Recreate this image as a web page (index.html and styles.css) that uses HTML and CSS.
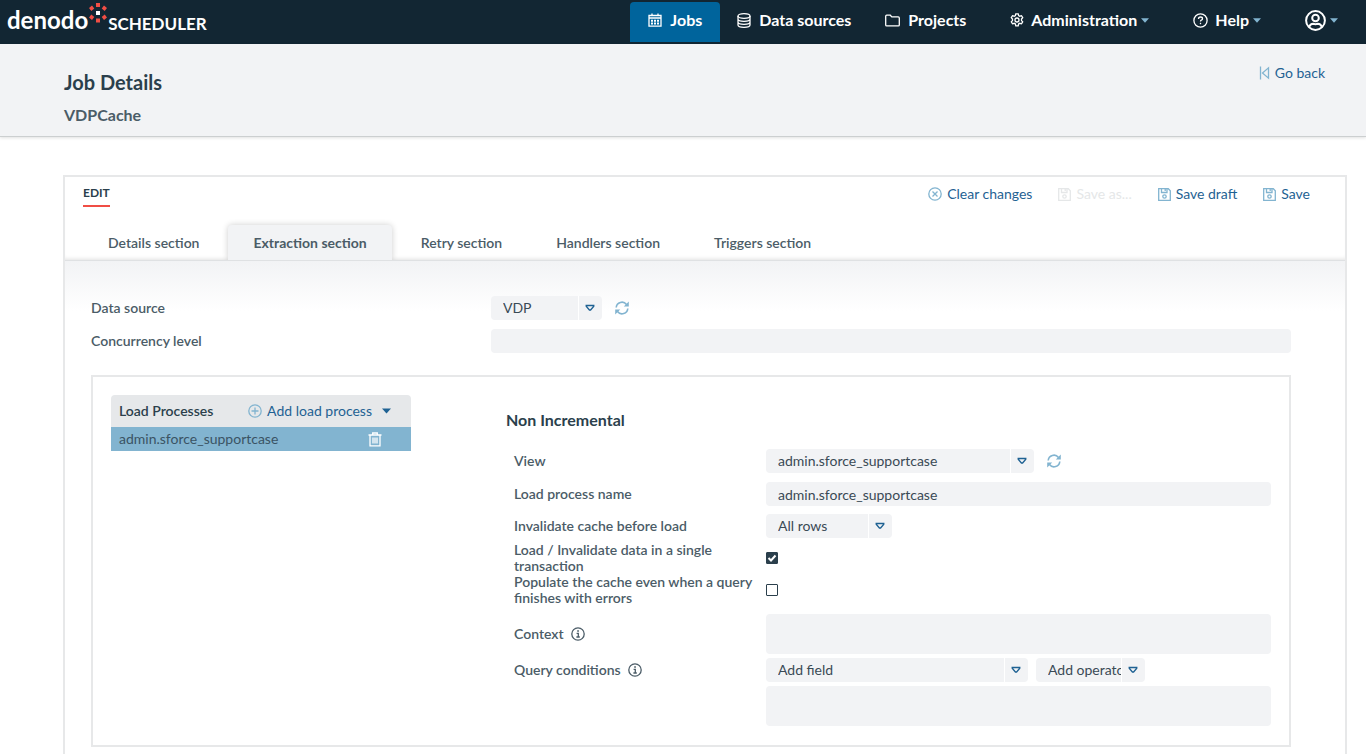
FILE: index.html
```html
<!DOCTYPE html>
<html lang="en">
<head>
    <meta charset="UTF-8">
    <meta name="viewport" content="width=device-width, initial-scale=1.0">
    <title>Denodo Scheduler</title>
    <link rel="stylesheet" href="styles.css">
</head>
<body>
    <!-- shared icons -->
    <svg class="sprite" aria-hidden="true">
        <symbol id="i-save" viewBox="0 0 13 13">
            <path d="M.700.700h9.600l2 2v9.600H.700z M3.500.700v3.800h5.500V.700 M7.200 1v2"/>
            <circle cx="6.500" cy="8.500" r="1.700"/>
        </symbol>
        <symbol id="i-refresh" viewBox="0 0 14 14">
            <path d="M1.200 6.500A5.800 5.800 0 0 1 11.500 3.400 M12.800 7.500A5.800 5.800 0 0 1 2.500 10.600"/>
            <path class="solid" d="M13.800 .500v5H8.800z M.200 13.500V8.500h5z"/>
        </symbol>
        <symbol id="i-info" viewBox="0 0 14 14">
            <circle cx="7" cy="7" r="6.200"/>
            <path d="M5.600 6.300H7.300V10 M5.400 10h3.400"/>
            <path class="solid" d="M6.200 3.200h1.700v1.600H6.200z"/>
        </symbol>
        <symbol id="i-down" viewBox="0 0 10 8">
            <path d="M1.200 1.500h7.600v.8L5.600 6H4.400L1.200 2.300z"/>
        </symbol>
        <symbol id="i-caret" viewBox="0 0 8 5">
            <path class="solid" d="M0 .2h8L4 4.800z"/>
        </symbol>
    </svg>

    <header class="topbar">
        <a class="brand" href="#">
            <span class="brand-name">denodo</span>
            <svg class="brand-dots" width="20" height="20" viewBox="0 0 20 20">
                <g fill="#f04e45">
                    <path d="M8 0h4v4H8z M8 15.500h4v4H8z"/>
                    <path d="M1 5l3-2.500L6.300 5.500 3.300 8z M16 2.500L19 5 16.700 8l-3-2.500z M3.300 11.500l3 2.500L4 17l-3-2.500z M16.700 11.500L19 14.500 16 17l-2.300-3z"/>
                </g>
                <path fill="#fff" d="M8 8h4v4H8z"/>
            </svg>
            <span class="brand-product">SCHEDULER</span>
        </a>
        <nav class="menu">
            <a class="menu-item active" href="#">
                <svg class="icon" width="14" height="14" viewBox="0 0 14 14">
                    <path d="M1 2.500h12v10.700H1z M1 5h12 M4 .500V3 M10 .500V3"/>
                    <path stroke-dasharray="2 1" d="M3 7.800h8 M3 10.600h8" stroke-width="2"/>
                </svg>
                Jobs
            </a>
            <a class="menu-item" href="#">
                <svg class="icon" width="14" height="15" viewBox="0 0 14 15">
                    <ellipse cx="7" cy="3" rx="6" ry="2.300"/>
                    <path d="M1 3v9c0 1.300 2.700 2.300 6 2.300s6-1 6-2.300V3 M1 6c0 1.300 2.700 2.300 6 2.300S13 7.300 13 6 M1 9c0 1.300 2.700 2.300 6 2.300s6-1 6-2.300"/>
                </svg>
                Data sources
            </a>
            <a class="menu-item" href="#">
                <svg class="icon" width="15" height="13" viewBox="0 0 15 13">
                    <path d="M.700 2.200q0-1 1-1h3.600l1.500 1.700h6.500q1 0 1 1v7q0 1-1 1H1.700q-1 0-1-1z"/>
                </svg>
                Projects
            </a>
            <button class="menu-item drop" type="button">
                <svg class="icon" width="14" height="14" viewBox="0 0 14 14">
                    <path d="M5.800.8h2.400l.4 1.700 1.200.7 1.700-.5 1.200 2-1.200 1.300v1.600l1.200 1.200-1.200 2-1.700-.5-1.200.7-.4 1.900H5.800l-.4-1.900-1.200-.7-1.700.5-1.200-2 1.200-1.200V6L1.300 4.700l1.200-2 1.700.5 1.200-.7z"/>
                    <circle cx="7" cy="7" r="2"/>
                </svg>
                Administration
                <svg class="caret" width="8" height="5"><use href="#i-caret"/></svg>
            </button>
            <button class="menu-item drop" type="button">
                <svg class="icon" width="15" height="15" viewBox="0 0 15 15">
                    <circle cx="7.500" cy="7.500" r="6.600"/>
                    <path d="M5.500 6q0-2 2-2t2 1.700q0 1-1.200 1.500-.8.400-.8 1.400"/>
                    <path d="M7.500 9.800v1.400"/>
                </svg>
                Help
                <svg class="caret" width="8" height="5"><use href="#i-caret"/></svg>
            </button>
            <button class="menu-item drop user" type="button" aria-label="User">
                <svg class="icon" width="21" height="21" viewBox="0 0 21 21">
                    <circle cx="10.500" cy="10.500" r="9.400"/>
                    <circle cx="10.500" cy="8" r="3.300"/>
                    <path d="M4 17q1.300-3.200 4-3.200 2.500.8 5 0 2.700 0 4 3.200"/>
                </svg>
                <svg class="caret" width="8" height="5"><use href="#i-caret"/></svg>
            </button>
        </nav>
    </header>

    <div class="page-head">
        <div>
            <h1>Job Details</h1>
            <h2>VDPCache</h2>
        </div>
        <a class="action" href="#">
            <svg class="icon" width="11" height="14" viewBox="0 0 11 14">
                <path d="M1.500 .500v13 M9.500 1.800v10.400L3.500 7z"/>
            </svg>
            Go back
        </a>
    </div>

    <main class="panel">
        <div class="panel-top">
            <span class="mode">EDIT</span>
            <div class="actions">
                <button class="action" type="button">
                    <svg class="icon" width="14" height="14" viewBox="0 0 14 14"><circle cx="7" cy="7" r="6.200"/><path d="M4.500 4.500l5 5 M9.500 4.500l-5 5"/></svg>
                    Clear changes
                </button>
                <button class="action" type="button" disabled>
                    <svg class="icon" width="13" height="13"><use href="#i-save"/></svg>
                    Save as...
                </button>
                <button class="action" type="button">
                    <svg class="icon" width="13" height="13"><use href="#i-save"/></svg>
                    Save draft
                </button>
                <button class="action" type="button">
                    <svg class="icon" width="13" height="13"><use href="#i-save"/></svg>
                    Save
                </button>
            </div>
        </div>

        <nav class="tabs">
            <a class="tab" href="#">Details section</a>
            <a class="tab active" href="#">Extraction section</a>
            <a class="tab" href="#">Retry section</a>
            <a class="tab" href="#">Handlers section</a>
            <a class="tab" href="#">Triggers section</a>
        </nav>

        <form class="section">
            <div class="row">
                <label for="source">Data source</label>
                <div class="field">
                    <span class="select source">
                        <select id="source"><option>VDP</option></select>
                        <span class="arrow"><svg class="icon" width="10" height="8"><use href="#i-down"/></svg></span>
                    </span>
                    <button class="refresh" type="button" aria-label="Refresh"><svg class="icon" width="14" height="14"><use href="#i-refresh"/></svg></button>
                </div>
            </div>
            <div class="row">
                <label for="level">Concurrency level</label>
                <input class="text" type="text" id="level">
            </div>

            <div class="loads">
                <div class="processes">
                    <div class="processes-head">
                        <span>Load Processes</span>
                        <button class="action" type="button">
                            <svg class="icon" width="14" height="14" viewBox="0 0 14 14"><circle cx="7" cy="7" r="6.200"/><path d="M7 3.500v7 M3.500 7h7"/></svg>
                            Add load process
                            <svg class="caret" width="9" height="6"><use href="#i-caret"/></svg>
                        </button>
                    </div>
                    <div class="process">
                        <span>admin.sforce_supportcase</span>
                        <button class="remove" type="button" aria-label="Remove">
                            <svg class="icon" width="14" height="15" viewBox="0 0 14 15">
                                <path d="M.500 3h13 M4.700 3V1h4.600v2 M2 3v10.800h10V3 M5 5.500v6 M7 5.500v6 M9 5.500v6"/>
                            </svg>
                        </button>
                    </div>
                </div>

                <div class="details">
                    <h3>Non Incremental</h3>
                    <div class="row">
                        <label for="view">View</label>
                        <div class="field">
                            <span class="select view">
                                <select id="view"><option>admin.sforce_supportcase</option></select>
                                <span class="arrow"><svg class="icon" width="10" height="8"><use href="#i-down"/></svg></span>
                            </span>
                            <button class="refresh" type="button" aria-label="Refresh"><svg class="icon" width="14" height="14"><use href="#i-refresh"/></svg></button>
                        </div>
                    </div>
                    <div class="row">
                        <label for="name">Load process name</label>
                        <input class="text" type="text" id="name" value="admin.sforce_supportcase">
                    </div>
                    <div class="row">
                        <label for="invalidate">Invalidate cache before load</label>
                        <div class="field">
                            <span class="select rows">
                                <select id="invalidate"><option>All rows</option></select>
                                <span class="arrow"><svg class="icon" width="10" height="8"><use href="#i-down"/></svg></span>
                            </span>
                        </div>
                    </div>
                    <div class="row check">
                        <label for="single">Load / Invalidate data in a single transaction</label>
                        <input type="checkbox" id="single" checked>
                    </div>
                    <div class="row check">
                        <label for="populate">Populate the cache even when a query finishes with errors</label>
                        <input type="checkbox" id="populate">
                    </div>
                    <div class="row context">
                        <label for="context">Context <svg class="icon info" width="14" height="14"><use href="#i-info"/></svg></label>
                        <textarea class="text" id="context"></textarea>
                    </div>
                    <div class="row query">
                        <label for="query">Query conditions <svg class="icon info" width="14" height="14"><use href="#i-info"/></svg></label>
                        <div class="query-fields">
                            <div class="field">
                                <span class="select add-field">
                                    <select aria-label="Field"><option>Add field</option></select>
                                    <span class="arrow"><svg class="icon" width="10" height="8"><use href="#i-down"/></svg></span>
                                </span>
                                <span class="select add-operator">
                                    <select aria-label="Operator"><option>Add operator</option></select>
                                    <span class="arrow"><svg class="icon" width="10" height="8"><use href="#i-down"/></svg></span>
                                </span>
                            </div>
                            <textarea class="text" id="query"></textarea>
                        </div>
                    </div>
                </div>
            </div>
        </form>
    </main>
</body>
</html>
```
FILE: styles.css
```css
* {
    box-sizing: border-box;
}
body {
    display: flex;
    flex-direction: column;
    min-height: 100vh;
    margin: 0;
    background-color: #ffffff;
    color: #4b5c67;
    font-family: Lato, "Open Sans", sans-serif;
    font-size: 14px;
    line-height: 16px;
}
button, input, select, textarea {
    font: inherit;
    color: inherit;
}
button {
    padding: 0;
    border: none;
    background: none;
    cursor: pointer;
}
a {
    color: inherit;
    text-decoration: none;
}
h1, h2, h3 {
    margin: 0;
}
.sprite {
    display: none;
}
.icon {
    flex: none;
    fill: none;
    stroke: currentColor;
    stroke-width: 1.3;
}
.solid {
    fill: currentColor;
    stroke: none;
}

/* top bar */
.topbar {
    display: flex;
    justify-content: space-between;
    height: 44px;
    padding: 2px 28px 2px 7px;
    background-color: #122633;
    color: #ffffff;
}
.brand {
    display: flex;
    align-items: center;
    font-weight: bold;
}
.brand-name {
    padding-bottom: 4px;
    font-size: 24px;
    line-height: 36px;
}
.brand-dots {
    align-self: flex-start;
    margin-top: 1px;
}
.brand-product {
    font-size: 17px;
    padding-top: 4px;
}
.menu {
    display: flex;
}
.menu-item {
    display: flex;
    align-items: center;
    gap: 8px;
    padding: 0 17px 4px;
    font-size: 16px;
    font-weight: bold;
}
.menu-item.active {
    padding-left: 18px;
    padding-right: 18px;
    background-color: #00649c;
    border-radius: 4px 4px 0 0;
}
.menu-item .caret {
    color: #82b4d0;
}
.drop {
    gap: 4px;
    padding: 0 17px 4px 27px;
}
.drop .icon {
    margin-right: 3px;
}
.user {
    padding-right: 0;
}
.user .icon {
    margin-right: 0;
    stroke-width: 2;
}

/* page heading */
.page-head {
    display: flex;
    justify-content: space-between;
    align-items: flex-start;
    height: 93px;
    padding: 26px 41px 0 64px;
    background-color: #f2f3f5;
    border-bottom: 1px solid #cccfd0;
    box-shadow: 0 1px 3px rgba(0, 0, 0, 0.12);
}
h1 {
    font-size: 20px;
    line-height: 24px;
    color: #2b3f4c;
}
h2 {
    margin-top: 11px;
    font-size: 16px;
    line-height: 20px;
}
.action {
    display: flex;
    align-items: center;
    gap: 5px;
    color: #1f6293;
}
.action .icon {
    color: #82b4d0;
}
.page-head .action {
    margin-top: -5px;
}
.action:disabled, .action:disabled .icon {
    color: #e5e7e8;
}

/* edit panel */
.panel {
    flex: 1;
    display: flex;
    flex-direction: column;
    margin: 38px 19px 0 63px;
    border: 2px solid #e7e8e9;
    border-bottom: none;
}
.panel-top {
    display: flex;
    justify-content: space-between;
    align-items: flex-start;
    padding: 8px 35px 0 18px;
}
.mode {
    padding-bottom: 4px;
    border-bottom: 2px solid #f04e45;
    font-size: 12px;
    font-weight: bold;
    color: #2b3f4c;
}
.actions {
    display: flex;
    gap: 26px;
    padding-top: 1px;
}
.tabs {
    display: flex;
    margin-top: 12px;
    padding: 6px 0 0 18px;
    border-bottom: 1px solid #dfe1e3;
    box-shadow: inset 0 -4px 4px -3px rgba(0, 0, 0, 0.12);
    overflow: hidden;
}
.tab {
    padding: 10px 25px 9px;
    margin-right: 4px;
    font-weight: 600;
}
.tab.active {
    background-color: #f2f3f5;
    border-radius: 4px 4px 0 0;
    box-shadow: 0 0 6px rgba(0, 0, 0, 0.2);
    font-weight: bold;
}
.section {
    flex: 1;
    padding: 31px 54px 7px 26px;
    background: linear-gradient(#f2f3f5, #ffffff 50px);
}
.row {
    display: grid;
    grid-template-columns: 400px 1fr;
    align-items: center;
    padding: 4px 0 5px;
}
.row label {
    font-weight: 600;
}
.field {
    display: flex;
    align-items: center;
    gap: 13px;
}
.text {
    display: block;
    width: 100%;
    height: 24px;
    margin: 0;
    padding: 0 12px;
    border: none;
    border-radius: 4px;
    background-color: #f2f3f5;
    color: #3a4a55;
}
textarea.text {
    height: 40px;
    padding: 4px 12px;
    resize: none;
}
.select {
    display: grid;
    grid-template-columns: 1fr 24px;
    height: 24px;
    background-color: #f2f3f5;
    border-radius: 4px;
}
.select select {
    grid-area: 1 / 1 / 2 / 3;
    min-width: 0;
    height: 24px;
    padding: 0 24px 0 12px;
    border: none;
    background: none;
    color: #3a4a55;
    appearance: none;
    text-overflow: clip;
}
.arrow {
    grid-area: 1 / 2;
    display: flex;
    align-items: center;
    justify-content: center;
    padding-right: 2px;
    border-left: 1px solid #ffffff;
    color: #1f6293;
    pointer-events: none;
}
.source {
    width: 111px;
}
.view {
    width: 268px;
}
.rows {
    width: 126px;
}
.add-field {
    width: 262px;
}
.add-operator {
    width: 109px;
}
.refresh {
    display: flex;
    color: #82b4d0;
}
.refresh .icon {
    stroke-width: 1.6;
}

/* load processes */
.loads {
    display: grid;
    grid-template-columns: 300px 1fr;
    gap: 95px;
    align-items: start;
    margin-top: 17px;
    padding: 18px;
    border: 2px solid #e7e8e9;
    background-color: #ffffff;
}
.processes-head {
    display: flex;
    justify-content: space-between;
    align-items: center;
    height: 32px;
    padding: 0 20px 0 8px;
    border-radius: 4px 4px 0 0;
    background-color: #e6e8ea;
    color: #2b3f4c;
    font-weight: 600;
}
.processes-head .action {
    font-weight: normal;
}
.processes-head .caret {
    margin-left: 5px;
}
.process {
    display: flex;
    justify-content: space-between;
    align-items: center;
    height: 24px;
    padding: 0 29px 0 8px;
    background-color: #82b4d0;
    color: #3a5364;
}
.remove {
    display: flex;
    color: #ffffff;
}
.details {
    padding-top: 15px;
}
h3 {
    margin-bottom: 15px;
    font-size: 16px;
    line-height: 20px;
    color: #2b3f4c;
}
.details .row {
    grid-template-columns: 252px 1fr;
    padding: 4px 0;
    margin-left: 8px;
}
.details h3 + .row {
    padding-bottom: 5px;
}
.details .check {
    height: 32px;
    padding: 0;
}
.info {
    margin-left: 4px;
    vertical-align: -2px;
}
input[type="checkbox"] {
    width: 12px;
    height: 12px;
    margin: 0;
    border: 1px solid #2b3f4c;
    border-radius: 1px;
    appearance: none;
}
input[type="checkbox"]:checked {
    background: #2b3f4c url("data:image/svg+xml,%3Csvg xmlns='http://www.w3.org/2000/svg' viewBox='0 0 10 10'%3E%3Cpath d='M1.500 5l2.500 2.500L8.500 2.500' fill='none' stroke='white' stroke-width='2'/%3E%3C/svg%3E");
}
.details .context {
    padding-top: 8px;
}
.details .query {
    align-items: start;
    padding: 0 0 1px;
}
.query label {
    padding-top: 4px;
}
.query .field {
    gap: 8px;
    margin-bottom: 4px;
}
```
